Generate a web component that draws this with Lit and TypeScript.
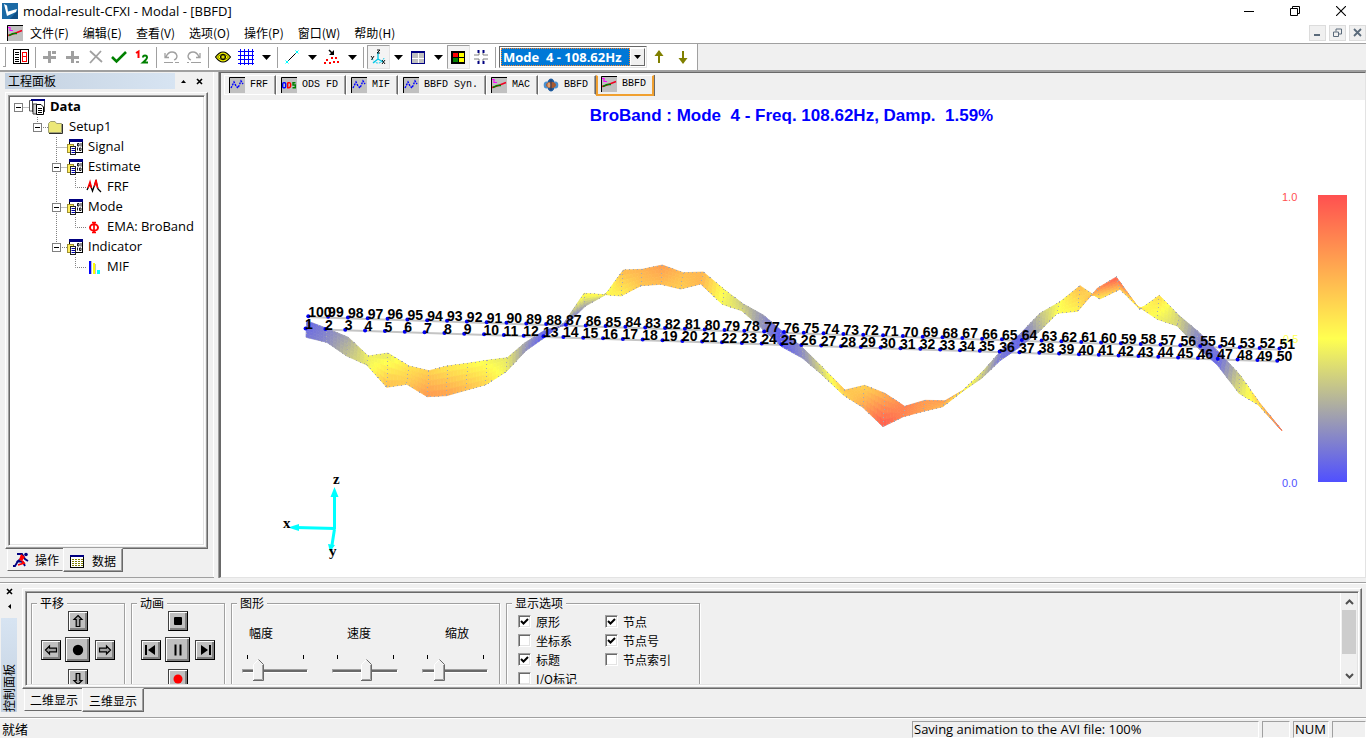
import { LitElement, html, css, svg, nothing, TemplateResult } from "lit";
import { customElement, state } from "lit/decorators.js";
import { classMap } from "lit/directives/class-map.js";

type Pt = [number, number];

/* Deformed edge through nodes 100..51 */
const UPPER: Pt[] = [
  [306.7, 320.7], [326.7, 328.3], [348.3, 337.3], [368.3, 356], [388, 353],
  [409, 366], [429, 370.7], [447.3, 366], [467.7, 363.3], [486.7, 360.3],
  [507.3, 357.7], [525, 342.7], [545, 330], [566, 325], [585.5, 306],
  [605, 295], [623.3, 270], [642.3, 269.3], [662.3, 265], [683.3, 272.7],
  [703.3, 272], [724, 289.3], [743.3, 304], [763.3, 315], [780, 329.3],
  [801.7, 346.7], [823.3, 368], [845, 390], [864.7, 385.3], [885, 393.3],
  [904.7, 406.3], [925, 400.3], [945, 400.7], [963.5, 390], [984, 370],
  [1001.7, 350], [1020, 334], [1040, 313.3], [1059.3, 302.3], [1080, 285.7],
  [1099.7, 299], [1120, 289.3], [1140, 309.3], [1159.3, 295.3], [1179.3, 315.7],
  [1198.3, 331.7], [1220, 353.3], [1240, 375], [1260, 403.3], [1281.7, 430],
];
/* Deformed edge through nodes 1..50 */
const LOWER: Pt[] = [
  [306, 337.3], [326.7, 342.3], [346.7, 356], [366.7, 365], [386.7, 387.3],
  [406.7, 384.3], [427.3, 396.7], [446.7, 395.7], [465.7, 390.3], [485.7, 384.7],
  [506, 372], [526, 350.7], [545, 337.3], [564, 323], [584, 293.3],
  [603, 294.5], [621, 296], [641, 285.7], [661, 284.3], [680.7, 289],
  [700.7, 284], [722.3, 304.3], [741.7, 310.7], [761.7, 328.3], [781.7, 346.7],
  [802.7, 358.3], [821.7, 374.5], [843.3, 395], [862.7, 407.3], [883, 426.7],
  [903.3, 416.7], [923.3, 411.3], [942.7, 406.7], [963, 391], [981.7, 378.3],
  [1000, 360.7], [1020, 347], [1039, 331.7], [1057.3, 313.3], [1077.7, 311.3],
  [1097.3, 288.3], [1116.3, 277], [1137.3, 306], [1157.3, 319.3], [1177.3, 326],
  [1196.7, 346.7], [1217.3, 365], [1239, 393.3], [1258.3, 405], [1281.5, 430.5],
];
const restLower = (i: number): Pt => [305.6 + i * 19.83, 328.4 + i * 0.66];
const restUpper = (i: number): Pt => [308.3 + i * 19.82, 316.2 + i * 0.66];

const SCALE: [number, number, number][] = [[80, 80, 255], [255, 255, 80], [255, 80, 80]];
function heat(v: number): string {
  const t = Math.max(0, Math.min(1, v)) * 2;
  const k = t < 1 ? 0 : 1;
  const f = t - k;
  const c = SCALE[k].map((a, n) => Math.round(a + (SCALE[k + 1][n] - a) * f));
  return `rgb(${c.join(",")})`;
}
const mix = (a: number, b: number, t: number) => a + (b - a) * t;

function ribbon(): TemplateResult[] {
  const out: TemplateResult[] = [];
  const amp = (p: Pt, rest: Pt) => Math.abs(p[1] - rest[1]) / 81;
  const NX = 6;
  const NY = 5;
  for (let i = 0; i < UPPER.length - 1; i++) {
    const u0 = amp(UPPER[i], restUpper(i));
    const u1 = amp(UPPER[i + 1], restUpper(i + 1));
    const l0 = amp(LOWER[i], restLower(i));
    const l1 = amp(LOWER[i + 1], restLower(i + 1));
    const at = (s: number, t: number): string => {
      const x = mix(mix(UPPER[i][0], UPPER[i + 1][0], s), mix(LOWER[i][0], LOWER[i + 1][0], s), t);
      const y = mix(mix(UPPER[i][1], UPPER[i + 1][1], s), mix(LOWER[i][1], LOWER[i + 1][1], s), t);
      return `${x.toFixed(2)},${y.toFixed(2)}`;
    };
    for (let a = 0; a < NX; a++) {
      for (let b = 0; b < NY; b++) {
        const s = (a + 0.5) / NX;
        const t = (b + 0.5) / NY;
        const c = heat(mix(mix(u0, u1, s), mix(l0, l1, s), t));
        out.push(svg`<polygon fill=${c} stroke=${c}
          points=${[at(a / NX, b / NY), at((a + 1) / NX, b / NY), at((a + 1) / NX, (b + 1) / NY), at(a / NX, (b + 1) / NY)].join(" ")}></polygon>`);
      }
    }
  }
  return out;
}

const poly = (pts: Pt[]) => pts.map((p) => p.join(",")).join(" ");

@customElement("mode-plot")
class ModePlot extends LitElement {
  static styles = css`
    :host { display: block; flex: 1; min-height: 0; background: #fff; overflow: hidden; }
    svg { display: block; width: 100%; height: 100%; }
    .title { font: bold 17px "Liberation Sans", sans-serif; fill: #00f; white-space: pre; }
    .node { font: bold 14px "Liberation Sans", sans-serif; fill: #000; }
    .scale { font: 11px "Liberation Sans", sans-serif; }
    .axis { font: bold 15px "Liberation Serif", serif; fill: #000; }
  `;

  render() {
    const idx = UPPER.map((_, i) => i);
    return html`<svg viewBox="221 100 1144 477" role="img" aria-label="Mode shape">
      <defs>
        <linearGradient id="bar" x1="0" y1="0" x2="0" y2="1">
          <stop offset="0" stop-color="#ff5050"></stop>
          <stop offset=".5" stop-color="#ffff50"></stop>
          <stop offset="1" stop-color="#5050ff"></stop>
        </linearGradient>
      </defs>
      <text class="title" x="791.5" y="121" text-anchor="middle">BroBand : Mode${"\u00a0\u00a0"}4 - Freq. 108.62Hz, Damp.${"\u00a0\u00a0"}1.59%</text>
      <g stroke="#c4c4c4" stroke-width="2">
        <line x1="308" y1="317" x2="1280" y2="349.5"></line>
        <line x1="306" y1="329" x2="1277" y2="361.5"></line>
      </g>
      <g stroke-width=".7" stroke-linejoin="round">${ribbon()}</g>
      <g fill="none" stroke="#a8a8b0" stroke-width="1" stroke-dasharray="1 3" shape-rendering="crispEdges">
        <polyline points=${poly(UPPER)}></polyline>
        <polyline points=${poly(LOWER)}></polyline>
        ${idx.map((i) => svg`<line x1=${UPPER[i][0]} y1=${UPPER[i][1]} x2=${LOWER[i][0]} y2=${LOWER[i][1]}></line>`)}
      </g>
      <g fill="#0000f0">
        ${idx.map((i) => svg`<circle cx=${restUpper(i)[0]} cy=${restUpper(i)[1]} r="2"></circle>
          <circle cx=${restLower(i)[0]} cy=${restLower(i)[1]} r="2"></circle>`)}
      </g>
      <text class="scale" x="1283" y="343" fill="#ffff50">0.5</text>
      ${idx.map((i) => svg`<text class="node" x=${restUpper(i)[0]} y=${restUpper(i)[1] + 0.5}>${100 - i}</text>
        <text class="node" x=${restLower(i)[0] - 0.5} y=${restLower(i)[1] + 0.5}>${i + 1}</text>`)}
      <rect x="1318" y="195" width="29" height="287" fill="url(#bar)"></rect>
      <text class="scale" x="1282" y="201" fill="#ff5050">1.0</text>
      <text class="scale" x="1282" y="487" fill="#5050ff">0.0</text>
      <g stroke="#0ff" stroke-width="3" fill="#0ff">
        <path d="M334.500 529V494M335 528.500L296 527.500M334.500 529L332 545"></path>
        <path d="M334.500 487l4 10h-8zM288 527.500l11 -3.500v7zM330 552l-2 -8 7 1z" stroke="none"></path>
      </g>
      <text class="axis" x="333" y="484">z</text>
      <text class="axis" x="283" y="528">x</text>
      <text class="axis" x="329" y="556">y</text>
    </svg>`;
  }
}

const icon = (body: TemplateResult, w = 16, h = 16) =>
  html`<svg width=${w} height=${h} viewBox="0 0 ${w} ${h}" fill="none" aria-hidden="true">${body}</svg>`;

const I: Record<string, TemplateResult> = {
  app: icon(svg`<rect width="16" height="16" fill="#0f4f86"/><path d="M0 0H16V7L8 16H0Z" fill="#1b6aa5"/><path d="M2 1L5 2.500L6 8.500L15 6L14 9L5 13Z" fill="#fff"/>`),
  chart: icon(svg`<rect width="16" height="16" fill="#c0c0c0"/><path d="M.5 16V.5H16" stroke="#000"/><path d="M1 10.500L6 9L10 7.500L15 5.500" stroke="#f00020" stroke-width="1.500"/><path d="M2 10.500L6 8.500H10" stroke="#008000" stroke-width="1.500"/><path d="M1 2.500H3V5.500H6" stroke="#f0f" stroke-width="1.200"/>`),
  wave: icon(svg`<rect width="16" height="16" fill="#c0c0c0"/><path d="M.5 16V.5H16" stroke="#000"/><path d="M2 11L5 5L7 9L9 11L12 4L14 7" stroke="#00f" stroke-width="1.400" stroke-dasharray="2 1"/>`),
  ods: icon(svg`<rect width="16" height="16" fill="#c0c0c0"/><path d="M.5 16V.5H16" stroke="#000"/><rect x="1.700" y="5.700" width="3" height="5" rx="1" stroke="#00f" stroke-width="1.400"/><path d="M6.700 5.500V10.700H8Q9.700 10.500 9.700 8T8 5.700H6.700" stroke="#f00" stroke-width="1.400"/><path d="M14.500 5.700H12V8H14.300V10.700H11.500" stroke="#008000" stroke-width="1.400"/>`),
  globe: icon(svg`<ellipse cx="8" cy="8" rx="4" ry="6.500" fill="#1c5a9e"/><ellipse cx="3.500" cy="8" rx="2.800" ry="3.500" fill="#4a90d0"/><ellipse cx="12.500" cy="8" rx="2.800" ry="3.500" fill="#4a90d0"/><ellipse cx="8" cy="8" rx="5" ry="3.200" fill="#a85a30"/><ellipse cx="6" cy="8" rx="1.600" ry="2.600" fill="#e0a070"/><path d="M8 3V13" stroke="#203860"/>`),
  pages: icon(svg`<rect x=".5" y=".5" width="15" height="14" stroke="#000"/><path d="M2 3.500H6M2 5.500H6M2 8.500H6M2 10.500H6M2 12.500H6" stroke="#000"/><path d="M7.500 0V15" stroke="#000"/><rect x="9.500" y="3.500" width="4" height="9" stroke="#f00"/><path d="M9 7.500H14" stroke="#f00"/>`),
  plusUp: icon(svg`<path d="M7.500 2V14M1 8.500H14" stroke="#a0a0a0" stroke-width="3"/><path d="M10 3.500H14" stroke="#a0a0a0" stroke-width="3"/>`),
  plusDn: icon(svg`<path d="M7.500 2V14M1 8.500H14" stroke="#a0a0a0" stroke-width="3"/><path d="M11 13H14" stroke="#a0a0a0" stroke-width="2"/>`),
  cross: icon(svg`<path d="M2 2L14 13M13 2L2 14" stroke="#a0a0a0" stroke-width="1.800"/>`),
  check: icon(svg`<path d="M1 8L5.500 12.500L15 3" stroke="#008000" stroke-width="2.600"/>`),
  one2: icon(svg`<path d="M2 4L4.500 2.500V9" stroke="#f00" stroke-width="2"/><path d="M9 8.500Q9 6.500 11 6.500T13 8.500Q13 10 9 13.500H14" stroke="#008000" stroke-width="2"/>`),
  undo: icon(svg`<path d="M2 4V8.500H6M3 8Q5 3 9 3T14 7Q14 10 11 11" stroke="#a0a0a0" stroke-width="1.300"/><path d="M1 13.500H10M12 13.500H16" stroke="#a0a0a0"/>`),
  redo: icon(svg`<path d="M14 4V8.500H10M13 8Q11 3 7 3T2 7Q2 10 5 11" stroke="#a0a0a0" stroke-width="1.300"/><path d="M1 13.500H3M5 13.500H15" stroke="#a0a0a0"/>`),
  eye: icon(svg`<path d="M.5 8Q8 -2 15.500 8Q8 18 .5 8Z" fill="#ff0" stroke="#000" stroke-width="1.200"/><path d="M2.500 8Q8 2 13.500 8Q8 14 2.500 8Z" stroke="#808000"/><circle cx="8" cy="8" r="2.600" fill="#808000" stroke="#000"/><circle cx="8" cy="8" r="1" fill="#ff0"/>`),
  grid: icon(svg`<path d="M2.500 0V16M6.500 0V16M10.500 0V16M14.500 0V16M0 2.500H16M0 6.500H16M0 10.500H16M0 14.500H16" stroke="#00f"/>`),
  line: icon(svg`<path d="M4 12L12 4" stroke="#000"/><path d="M1.500 11.500L4.500 14.500M4.500 11.500L1.500 14.500M11.500 1.500L14.500 4.500M14.500 1.500L11.500 4.500" stroke="#0ff"/>`),
  scatter: icon(svg`<path d="M5 1L8 4" stroke="#000" stroke-width="1.600"/><path d="M10 1V6H5Z" fill="#000"/><path d="M2 10H4V12H2zM7 8H9V10H7zM5 13H7V15H5zM11 8H13V10H11zM13 12H15V14H13zM9 12H11V14H9zM0 13H2V15H0z" fill="#f00"/>`),
  axes: icon(svg`<path d="M8 3V10M8 10L3 14M8 10L13 13" stroke="#00c8e8" stroke-width="1.300"/><path d="M2 9Q4 14 8 14T14 9" stroke="#00c8e8" stroke-dasharray="2 1"/><path d="M7 1H10L7 4H10M1 7L2.500 9M4 7L1.500 11M12 11L15 15M15 11L12 15" stroke="#000" stroke-width=".9"/>`),
  window: icon(svg`<rect x="1.500" y="2.500" width="13" height="12" fill="#c0c0c0" stroke="#000080"/><path d="M1 3H15" stroke="#000080" stroke-width="2"/><path d="M8.500 4V14M2 9.500H14" stroke="#fff"/>`),
  colors: icon(svg`<rect x="1" y="2" width="14" height="13" fill="#000"/><path d="M3 4H8V8H3z" fill="#f00"/><path d="M9 4H14V8H9z" fill="#ff0"/><path d="M3 9H8V13H3z" fill="#008000"/><path d="M9 9H14V13H9z" fill="#ff0"/>`),
  tiles: icon(svg`<path d="M5.500 1V4M10.500 1V4M5.500 12V15M10.500 12V15" stroke="#000080" stroke-width="2"/><path d="M1 6H6V4M15 6H10V4M1 10H6V12M15 10H10V12" stroke="#808080"/>`),
  up: icon(svg`<path d="M8 2V14" stroke="#808000" stroke-width="2"/><path d="M8 1L12.500 7H3.500Z" fill="#808000"/>`),
  down: icon(svg`<path d="M8 2V14" stroke="#808000" stroke-width="2"/><path d="M8 15L12.500 9H3.500Z" fill="#808000"/>`),
  drop: icon(svg`<path d="M0 0H9L4.500 5Z" fill="#000"/>`, 9, 5),
  root: icon(svg`<path d="M.5 1.500H10V12H.5zM3.500 0V11" fill="#fff" stroke="#606060"/><rect x="3.500" y="1.500" width="12" height="11" fill="#fff" stroke="#404040"/><path d="M2 1H16" stroke="#000080" stroke-width="2"/><path d="M4 5H8V15H4z" fill="#d0d0d0" stroke="#404040"/><path d="M7.500 5.500H12L14.500 8V15.500H7.500Z" fill="#fff" stroke="#000"/><path d="M9 9.500H13M9 11.500H13M9 13.500H13" stroke="#000"/>`),
  folder: icon(svg`<path d="M.5 13.500V4.500L2.500 2.500H7L8.500 4.500H13.500V13.500Z" fill="#ece878" stroke="#a0a070"/><path d="M1 14.500H14.500V5" stroke="#303030"/>`),
  data: icon(svg`<rect x="2.500" y="1.500" width="13" height="12" fill="#fff" stroke="#000"/><path d="M2 1.500H16" stroke="#000080" stroke-width="3"/><path d="M10.500 4.500H12V7H10.500zM14 4V7.500M10.500 8.500V11.500M12.500 9H14V11.500H12.500z" stroke="#000" stroke-width=".9"/><rect x=".5" y="5.500" width="6" height="8" fill="#ffee60" stroke="#a09030"/><rect x="3.500" y="7.500" width="5" height="8" fill="#fff" stroke="#202020"/><path d="M4.500 9.500H8M4.500 11.500H8M4.500 13.500H8" stroke="#0000a0"/>`),
  frf: icon(svg`<path d="M1 11L4 5L6.500 12L10 2L12 10L15 13" stroke="#000" stroke-width="1.300"/><path d="M2 9L4 3L5.500 9M8.500 7L10 1L11.500 9" stroke="#f00" stroke-width="1.600"/>`),
  phi: icon(svg`<ellipse cx="8" cy="8.500" rx="4" ry="3.200" stroke="#f00" stroke-width="2"/><path d="M8 3V14M6 3.500H10M6 13.500H10" stroke="#f00" stroke-width="1.700"/>`),
  bars: icon(svg`<path d="M4 2V15" stroke="#00f" stroke-width="2"/><path d="M8 4V15" stroke="#ff0" stroke-width="2"/><path d="M12.500 11V15" stroke="#0ff" stroke-width="3"/><path d="M5.500 2V15M9.500 5V15" stroke="#c0c0c0"/>`),
  runner: icon(svg`<path d="M4 2H9L12 7L15 9M10 5L5 9L10 10L12 14M5 9L2 14H0" stroke="#000080" stroke-width="1.800"/><path d="M8 2L12 5L9 9L6 8Z" fill="#f00"/><path d="M9 9L11 11L5 13" stroke="#f00" stroke-width="1.800"/><circle cx="13" cy="2.500" r="1.800" fill="#000080"/>`),
  sheet: icon(svg`<rect x=".5" y="2.500" width="13" height="12" fill="#fff" stroke="#000"/><path d="M0 3H14" stroke="#000080" stroke-width="2"/><path d="M2 6.500H13M2 8.500H13M2 10.500H13M2 12.500H13" stroke="#808000" stroke-dasharray="2 1"/>`),
};

const arrow = (deg: number) =>
  icon(svg`<path transform="rotate(${deg} 7 7)" d="M7 1.500L11 5.500H8.800V12.500H5.200V5.500H3Z" fill="#a0a0a0" stroke="#000" stroke-width="1.200"/>`, 14, 14);
const P: Record<string, TemplateResult> = {
  up: arrow(0), right: arrow(90), down: arrow(180), left: arrow(270),
  dot: icon(svg`<circle cx="7" cy="7" r="5.200" fill="#000"/>`, 14, 14),
  stop: icon(svg`<rect x="3" y="3" width="8" height="8" rx="1" fill="#000"/>`, 14, 14),
  prev: icon(svg`<path d="M2 2V12" stroke="#000" stroke-width="2"/><path d="M11 2V12L4 7Z" fill="#000"/>`, 14, 14),
  next: icon(svg`<path d="M12 2V12" stroke="#000" stroke-width="2"/><path d="M3 2V12L10 7Z" fill="#000"/>`, 14, 14),
  pause: icon(svg`<path d="M4.500 1.500V12.500M9.500 1.500V12.500" stroke="#000" stroke-width="2"/>`, 14, 14),
  rec: icon(svg`<circle cx="7" cy="7" r="4.500" fill="#f00"/>`, 14, 14),
};

const smallClose = icon(svg`<path d="M1 1L6 6M6 1L1 6" stroke="#000" stroke-width="1.600"/>`, 7, 7);

interface Row { guide: string; icon: string; label: string; open?: boolean; root?: boolean }
const ROWS: Row[] = [
  { guide: "r", icon: "root", label: "Data", open: true, root: true },
  { guide: " L", icon: "folder", label: "Setup1", open: true },
  { guide: "  T", icon: "data", label: "Signal" },
  { guide: "  T", icon: "data", label: "Estimate", open: true },
  { guide: "  |L", icon: "frf", label: "FRF" },
  { guide: "  T", icon: "data", label: "Mode", open: true },
  { guide: "  |L", icon: "phi", label: "EMA: BroBand" },
  { guide: "  L", icon: "data", label: "Indicator", open: true },
  { guide: "   L", icon: "bars", label: "MIF" },
];
const GUIDE: Record<string, string> = {
  r: "M8.500 10.500H19", L: "M8.500 0V10.500H19", T: "M8.500 0V20M8.500 10.500H19", "|": "M8.500 0V20", " ": "",
};

@customElement("app-root")
class AppRoot extends LitElement {
  @state() private activeTab = 6;

  static styles = css`
    :host {
      display: flex; flex-direction: column; height: 100vh; overflow: hidden;
      background: #f0f0f0; color: #000;
      font: 12px/16px "Noto Sans CJK SC", sans-serif;
    }
    * { box-sizing: border-box; }
    button, select, input { font: inherit; color: inherit; margin: 0; }
    button { border: 0; padding: 0; background: none; display: flex; align-items: center; justify-content: center; }
    svg { display: block; flex: none; }
    .latin { font: 13px/20px "Open Sans", "Noto Sans CJK SC", sans-serif; }

    .titlebar { display: flex; align-items: center; height: 22px; padding: 0 2px; background: #fff; }
    .titlebar h1 { margin: 0 0 0 5px; flex: 1; font-weight: 400; }
    .titlebar button { width: 46px; height: 20px; }
    .menubar { display: flex; align-items: center; height: 21px; background: #fff; padding-left: 7px; }
    .menubar nav { display: flex; flex: 1; padding-left: 7px; gap: 14px; }
    .menubar nav button { line-height: 20px; }
    .mdi { width: 17px; height: 16px; background: #f0f0f0; border: 1px solid #dcdcdc; margin-left: 3px; }

    .toolbar { display: flex; height: 29px; border-top: 1px solid #a0a0a0; border-bottom: 2px solid #a0a0a0; }
    .tools { display: flex; align-items: center; background: #fff; border-right: 1px solid #a0a0a0; padding-right: 2px; }
    .grip { width: 3px; height: 20px; margin: 0 4px 0 3px; border: 1px solid #a0a0a0; border-width: 0 1px 1px 0; }
    .tool { width: 23px; height: 24px; justify-content: flex-start; padding-left: 3px; }
    .tool.drop { width: 17px; padding-left: 4px; }
    .tool.wide { width: 24px; padding-left: 4px; }
    .tool.on { padding-left: 2px; background: #f4f4f4; border: 1px solid #a0a0a0; border-right-color: #e3e3e3; border-bottom-color: #e3e3e3; }
    .sep { width: 6px; height: 21px; display: flex; padding-left: 2px; }
    .sep::before { content: ""; width: 1px; background: #a0a0a0; }
    .combo { display: flex; width: 148px; height: 22px; border: 1px solid; border-color: #696969 #e3e3e3 #e3e3e3 #696969; padding: 1px; background: #fff; }
    .combo select {
      appearance: none; flex: 1; min-width: 0; border: 1px dotted #ff8728; border-radius: 0; outline: 0; padding: 0 1px;
      background: #0078d7; color: #fff; font: bold 13px/16px "Open Sans", sans-serif;
    }
    .combo span { width: 15px; display: grid; place-items: center; background: #f0f0f0; border: 1px solid; border-color: #fff #696969 #696969 #fff; }

    .main { flex: 1; min-height: 0; display: flex; }
    .side { width: 214px; display: flex; flex-direction: column; padding: 1px 6px 5px 5px; border-bottom: 1px solid #a0a0a0; box-shadow: inset -1px 0 #fff; }
    .caption { display: flex; align-items: center; height: 16px; }
    .caption h2 { margin: 0; width: 170px; padding-left: 3px; font: inherit; background: linear-gradient(90deg, #c4d1e0, #d7e4f2); }
    .caption button { width: 16px; height: 16px; }
    .raised { border: 1px solid; border-color: #fff #696969 #696969 #fff; box-shadow: inset -1px -1px #a0a0a0; padding: 2px; display: flex; min-height: 0; }
    .sunken { border: 1px solid; border-color: #a0a0a0 #fff #fff #a0a0a0; box-shadow: inset 1px 1px #696969, inset -1px -1px #e3e3e3; padding: 1px; flex: 1; min-width: 0; }
    .side .raised { flex: 1; margin-top: 3px; }
    .tree { background: #fff; }
    .tree ul { list-style: none; margin: 0; padding: 0; }
    .tree li { display: flex; align-items: center; height: 20px; }
    .tree .cell { width: 19px; height: 20px; display: grid; place-items: start; flex: none; }
    .tree .cell > * { grid-area: 1 / 1; }
    .expander { width: 9px; height: 9px; margin: 6px 0 0 4px; background: #fff; border: 1px solid #808080; }
    .tree .ico { margin-right: 5px; }
    .label { padding-bottom: 2px; }
    .root { font-weight: 700; }
    .tabs { display: flex; align-items: flex-start; padding-left: 2px; }
    .tabs button { height: 22px; gap: 6px; padding: 0 3px 1px 5px; border: 1px solid; border-color: transparent #f0f0f0 #696969 #fff; }
    .tabs button.active { height: 24px; padding: 2px 6px 0; border-color: transparent #696969 #696969 #fff; box-shadow: inset -1px -1px #a0a0a0; margin-top: -1px; background: #f0f0f0; }

    .view { flex: 1; min-width: 0; display: flex; flex-direction: column; margin-left: 5px; border: 1px solid; border-color: #696969 #e3e3e3 #e3e3e3 #696969; border-left: 2px solid #696969; box-shadow: -1px 0 #a0a0a0; }
    .doctabs { display: flex; align-items: flex-start; height: 27px; padding: 2px 0 0 3px; }
    .doctabs button {
      height: 20px; gap: 5px; padding: 0 7px 0 4px; white-space: pre;
      font: 10px/16px "Liberation Mono", monospace;
      border: 1px solid; border-color: #fff #696969 #fff #fff; box-shadow: inset -1px 0 #a0a0a0;
    }
    .doctabs button.active { height: 21px; padding: 0 6px 2px 3px; border: 2px solid #f0a030; border-top: 1px solid #fff; box-shadow: 1px 0 #696969; }

    .dock { display: flex; height: 139px; padding-top: 4px; }
    .dock .inner { flex: 1; min-width: 0; display: flex; border-top: 1px solid #a0a0a0; box-shadow: inset 0 1px #fff; padding: 1px 4px 5px 1px; }
    .strip { width: 16px; margin-right: 5px; display: flex; flex-direction: column; align-items: center; }
    .strip button { height: 15px; width: 16px; flex: none; }
    .strip h2 {
      margin: 4px 0 0; flex: 1; width: 16px; font: inherit; writing-mode: vertical-rl; text-orientation: sideways;
      transform: rotate(180deg); background: linear-gradient(0deg, #d7e4f2, #c4d1e0);
    }
    .control { flex: 1; min-width: 0; display: flex; flex-direction: column; padding-top: 4px; }
    .control .raised { height: 101px; }
    .control .sunken { display: flex; }
    .groups { flex: 1; min-width: 0; display: flex; align-items: flex-start; gap: 6px; padding: 2px 0 0 4px; overflow: hidden; }
    fieldset { flex: none; margin: 0; width: 94px; height: 120px; min-width: 0; border: 1px solid #a0a0a0; box-shadow: 1px 1px #fff, inset 1px 1px #fff; padding: 0 5px; }
    legend { line-height: 16px; padding: 0 3px; background: #f0f0f0; }
    .pad { display: grid; grid-template-columns: repeat(3, 27px); grid-auto-rows: 29px; place-items: center; margin-top: -5px; }
    .pad button { width: 20px; height: 20px; background: #c0c0c0; border: 1px solid; border-color: #404040 #000 #000 #404040; box-shadow: inset 1px 1px #fff, inset -1px -1px #808080, inset -2px -2px #808080; }
    .pad button.big { width: 25px; height: 25px; }
    fieldset.graphics { width: 269px; }
    fieldset.options { width: 194px; }
    .names { display: flex; gap: 74px; padding: 13px 12px 0; line-height: 18px; }
    .sliders { display: flex; gap: 24px; padding: 13px 5px 0; }
    .slider { width: 66px; }
    .ticks { display: flex; justify-content: space-between; padding: 0 4px 0 5px; }
    .ticks i { width: 1px; height: 4px; background: #000; }
    input[type="range"] { appearance: none; display: block; width: 66px; height: 24px; background: none; }
    input[type="range"]::-webkit-slider-runnable-track { height: 4px; background: #696969; border: 1px solid; border-color: #a0a0a0 #fff #fff #a0a0a0; }
    input[type="range"]::-webkit-slider-thumb {
      appearance: none; width: 11px; height: 22px; margin-top: -11px; border: 0;
      background: url("data:image/svg+xml,%3Csvg xmlns='http://www.w3.org/2000/svg' width='11' height='22'%3E%3Cpath d='M0 5.500L5.500 0L11 5.500V22H0Z' fill='%23f0f0f0'/%3E%3Cpath d='M.5 21V5.500L5.500 .5' stroke='%23fff' fill='none'/%3E%3Cpath d='M5.500 .5L10.500 5.500V21.500H0' stroke='%23696969' fill='none'/%3E%3Cpath d='M9.500 6V20.500H1' stroke='%23a0a0a0' fill='none'/%3E%3C/svg%3E");
    }
    .checks { display: grid; grid-template-columns: 87px auto; grid-auto-rows: 19px; justify-content: start; padding: 1px 6px 0; }
    .checks label { display: flex; align-items: center; gap: 5px; }
    .checks input {
      appearance: none; width: 13px; height: 13px; flex: none; background: #fff;
      border: 1px solid; border-color: #a0a0a0 #fff #fff #a0a0a0; box-shadow: inset 1px 1px #696969, inset -1px -1px #e3e3e3;
    }
    .checks input:checked {
      background: #fff url("data:image/svg+xml,%3Csvg xmlns='http://www.w3.org/2000/svg' width='11' height='11'%3E%3Cpath d='M2 5L4.500 7.500L9 3' stroke='%23000' stroke-width='2' fill='none'/%3E%3C/svg%3E") center no-repeat;
    }
    .scroll { width: 17px; padding: 0 1px; display: flex; flex-direction: column; border-left: 1px solid #fff; }
    .scroll button { height: 17px; flex: none; }
    .scroll .thumb { height: 44px; background: #cdcdcd; }
    .scroll .rest { flex: 1; }

    .status { display: flex; height: 21px; border-top: 1px solid #a0a0a0; box-shadow: inset 0 1px #fff; padding: 3px 0 0; gap: 3px; }
    .status div { border: 1px solid; border-color: #a0a0a0 #fff #fff #a0a0a0; height: 17px; line-height: 15px; padding: 0 1px; white-space: nowrap; }
    .status .ready { flex: 1; border-color: transparent; }
    .s1 { width: 347px; } .s2 { width: 28px; } .s3 { width: 36px; } .s4 { width: 34px; border-right: 0; }
  `;

  private tool(name: string, label: string, extra = {}) {
    return html`<button class=${classMap({ tool: true, ...extra })} aria-label=${label}>${I[name]}</button>`;
  }

  private tree() {
    return html`<ul class="latin">${ROWS.map((r) => html`<li>
      ${[...r.guide].map((g, i) => html`<span class="cell">
        <svg width="19" height="20" viewBox="0 0 19 20"><path d=${GUIDE[g]} fill="none" stroke="#808080" stroke-dasharray="1 1"></path></svg>
        ${r.open && i === r.guide.length - 1
          ? html`<button class="expander" aria-label="Collapse ${r.label}">${icon(svg`<path d="M1 3.500H6" stroke="#000"/>`, 7, 7)}</button>` : nothing}
      </span>`)}
      <span class="ico">${I[r.icon]}</span><span class=${classMap({ label: true, root: !!r.root })}>${r.label}</span>
    </li>`)}</ul>`;
  }

  private slider(label: string, value: number) {
    return html`<div class="slider"><div class="ticks"><i></i><i></i></div>
      <input type="range" id=${label} min="0" max="100" .value=${String(value)}></div>`;
  }

  private pad(keys: string[]) {
    return html`<div class="pad">${keys.map((k, i) => k
      ? html`<button class=${i === 4 ? "big" : ""} aria-label=${k}>${P[k]}</button>` : html`<span></span>`)}</div>`;
  }

  render() {
    const menus = ["文件(F)", "编辑(E)", "查看(V)", "选项(O)", "操作(P)", "窗口(W)", "帮助(H)"];
    const docs = [["wave", "FRF"], ["ods", "ODS FD"], ["wave", "MIF"], ["wave", "BBFD Syn."], ["chart", "MAC"], ["globe", "BBFD"], ["chart", "BBFD"]];
    const checks: [string, boolean][] = [["原形", true], ["节点", true], ["坐标系", false], ["节点号", true], ["标题", true], ["节点索引", false], ["I/O标记", false]];
    return html`
      <header class="titlebar">
        ${I.app}<h1 class="latin">modal-result-CFXI - Modal - [BBFD]</h1>
        <button aria-label="Minimize">${icon(svg`<path d="M0 5.500H10" stroke="#000"/>`, 10, 10)}</button>
        <button aria-label="Restore">${icon(svg`<path d="M.5 2.500H7.500V9.500H.5zM2.500 2V.5H9.500V7.500H8" stroke="#000"/>`, 10, 10)}</button>
        <button aria-label="Close">${icon(svg`<path d="M0 0L10 10M10 0L0 10" stroke="#000" stroke-width="1.100"/>`, 10, 10)}</button>
      </header>
      <div class="menubar">
        ${I.chart}
        <nav>${menus.map((m) => html`<button>${m}</button>`)}</nav>
        <button class="mdi" aria-label="Minimize document">${icon(svg`<path d="M1 7H7" stroke="#5a6a7a" stroke-width="2"/>`, 9, 9)}</button>
        <button class="mdi" aria-label="Restore document">${icon(svg`<path d="M.5 4H5.500V8.500H.5zM3 3.500V1H8.500V6H6" stroke="#5a6a7a"/>`, 9, 9)}</button>
        <button class="mdi" aria-label="Close document">${icon(svg`<path d="M1 1L8 8M8 1L1 8" stroke="#5a6a7a" stroke-width="1.800"/>`, 9, 9)}</button>
      </div>
      <div class="toolbar"><div class="tools">
        <span class="grip"></span>
        ${this.tool("pages", "Report")}<span class="sep"></span>
        ${this.tool("plusUp", "Add")}${this.tool("plusDn", "Insert")}${this.tool("cross", "Delete")}${this.tool("check", "Apply")}${this.tool("one2", "Number")}<span class="sep"></span>
        ${this.tool("undo", "Undo")}${this.tool("redo", "Redo")}<span class="sep"></span>
        ${this.tool("eye", "Show")}${this.tool("grid", "Grid")}${this.tool("drop", "Grid options", { drop: true })}<span class="sep"></span>
        ${this.tool("line", "Line")}${this.tool("drop", "Line options", { drop: true })}${this.tool("scatter", "Points")}${this.tool("drop", "Point options", { drop: true })}<span class="sep"></span>
        ${this.tool("axes", "Axes", { on: true })}${this.tool("drop", "Axes options", { drop: true })}${this.tool("window", "Layout")}${this.tool("drop", "Layout options", { drop: true })}${this.tool("colors", "Colours", { on: true })}${this.tool("tiles", "Tiles")}<span class="sep"></span>
        <div class="combo"><select aria-label="Mode"><option>Mode${"\u00a0\u00a0"}4 - 108.62Hz</option></select><span>${icon(svg`<path d="M0 0H7L3.500 4Z" fill="#000"/>`, 7, 4)}</span></div>
        ${this.tool("up", "Previous mode", { wide: true })}${this.tool("down", "Next mode", { wide: true })}
      </div></div>
      <div class="main">
        <aside class="side">
          <div class="caption"><h2>工程面板</h2>
            <button aria-label="Pin">${icon(svg`<path d="M0 3H5L2.500 0Z" fill="#000"/>`, 5, 3)}</button>
            <button aria-label="Close panel">${smallClose}</button></div>
          <div class="raised"><div class="sunken tree">${this.tree()}</div></div>
          <div class="tabs"><button>${I.runner}操作</button><button class="active">${I.sheet}数据</button></div>
        </aside>
        <section class="view">
          <div class="doctabs">${docs.map(([ic, t], i) => html`<button class=${i === this.activeTab ? "active" : ""}
            @click=${() => (this.activeTab = i)}>${I[ic]}${t}</button>`)}</div>
          <mode-plot></mode-plot>
        </section>
      </div>
      <div class="dock"><div class="inner">
        <div class="strip">
          <button aria-label="Close control panel">${smallClose}</button>
          <button aria-label="Collapse">${icon(svg`<path d="M3 0V5L0 2.500Z" fill="#000"/>`, 3, 5)}</button>
          <h2>控制面板</h2>
        </div>
        <div class="control">
          <div class="raised"><div class="sunken">
            <div class="groups">
              <fieldset><legend>平移</legend>${this.pad(["", "up", "", "left", "dot", "right", "", "down", ""])}</fieldset>
              <fieldset><legend>动画</legend>${this.pad(["", "stop", "", "prev", "pause", "next", "", "rec", ""])}</fieldset>
              <fieldset class="graphics"><legend>图形</legend>
                <div class="names"><label for="幅度">幅度</label><label for="速度">速度</label><label for="缩放">缩放</label></div>
                <div class="sliders">${this.slider("幅度", 18)}${this.slider("速度", 53)}${this.slider("缩放", 20)}</div>
              </fieldset>
              <fieldset class="options"><legend>显示选项</legend>
                <div class="checks">${checks.map(([t, c]) => html`<label><input type="checkbox" .checked=${c}>${t}</label>`)}</div>
              </fieldset>
            </div>
            <div class="scroll">
              <button aria-label="Scroll up">${icon(svg`<path d="M1 5L4.500 1.500L8 5" stroke="#505050" stroke-width="2"/>`, 9, 6)}</button>
              <div class="thumb"></div><div class="rest"></div>
              <button aria-label="Scroll down">${icon(svg`<path d="M1 1L4.500 4.500L8 1" stroke="#505050" stroke-width="2"/>`, 9, 6)}</button>
            </div>
          </div></div>
          <div class="tabs"><button>二维显示</button><button class="active">三维显示</button></div>
        </div>
      </div></div>
      <footer class="status latin">
        <div class="ready">就绪</div>
        <div class="s1">Saving animation to the AVI file: 100%</div>
        <div class="s2"></div><div class="s3">NUM</div><div class="s4"></div>
      </footer>`;
  }
}
